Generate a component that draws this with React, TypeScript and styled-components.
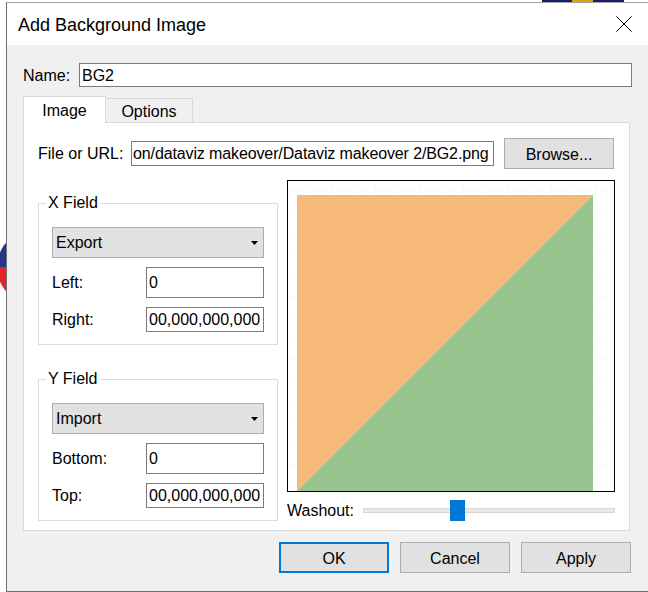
import styled, { createGlobalStyle } from "styled-components";

const GlobalStyle = createGlobalStyle`
	html, body {
		margin: 0;
		padding: 0;
		background: #fff;
	}
	body {
		font-family: "Liberation Sans", Arial, sans-serif;
		font-size: 16px;
		color: #000;
	}
	* {
		box-sizing: border-box;
	}
`;

// Desktop: what shows behind the dialog window
const Desktop = styled.div`
	position: relative;
	width: 648px;
	height: 592px;
	overflow: hidden;
	background: #fff;
	padding: 2px 0 0 6px;
`;

// bits of the app behind the dialog
const BackBar = styled.div`
	position: absolute;
	left: 542px;
	top: 0;
	width: 82px;
	height: 2px;
	background: linear-gradient(to right, #1b1f6b 0 30px, #d8a21b 30px 51px, #1b1f6b 51px);
`;

const BackBadge = styled.div`
	position: absolute;
	left: -3px;
	top: 229px;
	width: 76px;
	height: 76px;
	border-radius: 50%;
	background: linear-gradient(to bottom, #27348b 0 50%, #e2232a 50% 100%);
`;

const Dialog = styled.div`
	position: relative;
	z-index: 1;
	width: 661px;
	height: 590px;
	display: flex;
	flex-direction: column;
	background: #f0f0f0;
	border-left: 1px solid #6f6f6f;
	border-top: 1px solid #a0a0a0;
	border-bottom: 1px solid #6f6f6f;
`;

const TitleBar = styled.div`
	height: 42px;
	flex: none;
	display: flex;
	align-items: center;
	background: #fff;
	padding-left: 11px;
`;

const Title = styled.div`
	font-size: 18px;
	padding-top: 2px;
`;

const CloseBox = styled.div`
	margin-left: auto;
	margin-right: 20px;
	width: 46px;
	height: 100%;
	display: flex;
	align-items: center;
	justify-content: center;
`;

const Body = styled.div`
	flex: 1;
	display: flex;
	flex-direction: column;
	padding: 18px 0 0 16px;
`;

const NameRow = styled.div`
	display: flex;
	align-items: center;
	height: 24px;
`;

const Label = styled.div<{ $w: number }>`
	width: ${({ $w }) => $w}px;
	flex: none;
	white-space: nowrap;
	padding-top: 1px;
`;

const TextBox = styled.input<{ $w: number; $h: number; $pad?: number; $tight?: boolean }>`
	width: ${({ $w }) => $w}px;
	height: ${({ $h }) => $h}px;
	flex: none;
	margin: 0;
	padding: 1px ${({ $pad }) => $pad ?? 2}px 0;
	border: 1px solid #7a7a7a;
	background: #fff;
	font: inherit;
	letter-spacing: ${({ $tight }) => ($tight ? "-0.12px" : "normal")};
	color: #000;
	outline: none;
`;

const TabArea = styled.div`
	margin-top: 9px;
	width: 607px;
`;

const TabStrip = styled.div`
	display: flex;
	align-items: flex-end;
	margin-bottom: -1px;
	position: relative;
	z-index: 1;
`;

const Tab = styled.div<{ $active?: boolean }>`
	width: ${({ $active }) => ($active ? 83 : 87)}px;
	height: ${({ $active }) => ($active ? 27 : 25)}px;
	display: flex;
	align-items: center;
	justify-content: center;
	padding-top: ${({ $active }) => ($active ? 1 : 2)}px;
	background: ${({ $active }) => ($active ? "#fff" : "#f0f0f0")};
	border: 1px solid #d9d9d9;
	border-left: ${({ $active }) => ($active ? "1px solid #d9d9d9" : "none")};
	border-bottom: ${({ $active }) => ($active ? "none" : "1px solid #d9d9d9")};
`;

const Panel = styled.div`
	width: 607px;
	height: 409px;
	background: #fff;
	border: 1px solid #d9d9d9;
	padding: 15px 0 0 14px;
`;

const FileRow = styled.div`
	display: flex;
	align-items: center;
	height: 31px;
`;

const Button = styled.button<{ $primary?: boolean }>`
	width: 110px;
	height: 31px;
	flex: none;
	margin: 0;
	padding: 3px 0 0;
	font: inherit;
	color: #000;
	background: #e1e1e1;
	border: ${({ $primary }) => ($primary ? "2px solid #0078d7" : "1px solid #adadad")};
`;

const BrowseButton = styled(Button)`
	margin-left: 10px;
`;

const Columns = styled.div`
	display: grid;
	grid-template-columns: 240px 328px;
	column-gap: 9px;
	align-items: start;
	margin-top: 11px;
`;

const LeftCol = styled.div`
	display: flex;
	flex-direction: column;
	gap: 25px;
	padding-top: 14px;
`;

const Group = styled.fieldset`
	margin: 0;
	padding: 0;
	width: 240px;
	min-width: 0;
	border: 1px solid #dcdcdc;
`;

const Legend = styled.legend`
	margin-left: 7px;
	padding: 0 2px;
	height: 18px;
	line-height: 18px;
`;

const GroupBody = styled.div`
	display: flex;
	flex-direction: column;
	gap: 9px;
	padding: 15px 13px 12px 13px;
`;

const Select = styled.div`
	width: 212px;
	height: 31px;
	display: flex;
	align-items: center;
	padding: 1px 5px 0 3px;
	background: #e1e1e1;
	border: 1px solid #adadad;
`;

const Arrow = styled.svg`
	margin-left: auto;
	display: block;
`;

const FieldRow = styled.div`
	display: flex;
	align-items: center;
`;

const RightCol = styled.div`
	display: flex;
	flex-direction: column;
`;

const Preview = styled.div`
	width: 328px;
	height: 312px;
	border: 1px solid #000;
	padding: 14px 0 0 9px;
	background-color: #fff;
	background-image:
		repeating-linear-gradient(to right, transparent 0 21px, #f9f9f9 21px 22px),
		repeating-linear-gradient(to bottom, transparent 0 10px, #f9f9f9 10px 11px, transparent 11px 21px);
`;

const WashoutRow = styled.div`
	display: flex;
	align-items: center;
	height: 21px;
	margin-top: 8px;
`;

const Track = styled.div`
	position: relative;
	flex: 1;
	height: 21px;
	display: flex;
	align-items: center;
`;

const Rail = styled.div`
	width: 100%;
	height: 5px;
	background: #e7eae9;
	border: 1px solid #d6d6d6;
`;

const Thumb = styled.div`
	position: absolute;
	top: 0;
	width: 15px;
	height: 21px;
	background: #0078d7;
`;

const ButtonRow = styled.div`
	display: flex;
	justify-content: flex-end;
	gap: 11px;
	width: 608px;
	margin-top: 11px;
`;

const washout = 87; // thumb offset on the 252px track

const App = () => {
	return (
		<>
			<GlobalStyle />
			<Desktop>
				<BackBar />
				<BackBadge />
				<Dialog>
					<TitleBar>
						<Title>Add Background Image</Title>
						<CloseBox>
							<svg width="16" height="16" viewBox="0 0 16 16">
								<path d="M0.5 0.5 L15.5 15.5 M15.5 0.5 L0.5 15.5" stroke="#000" strokeWidth="1" />
							</svg>
						</CloseBox>
					</TitleBar>
					<Body>
						<NameRow>
							<Label $w={56}>Name:</Label>
							<TextBox $w={553} $h={24} readOnly value="BG2" />
						</NameRow>
						<TabArea>
							<TabStrip>
								<Tab $active>Image</Tab>
								<Tab>Options</Tab>
							</TabStrip>
							<Panel>
								<FileRow>
									<Label $w={93}>File or URL:</Label>
									<TextBox
										$w={363}
										$h={25}
										$pad={1}
										$tight
										readOnly
										value="on/dataviz makeover/Dataviz makeover 2/BG2.png"
									/>
									<BrowseButton>Browse...</BrowseButton>
								</FileRow>
								<Columns>
									<LeftCol>
										<Group>
											<Legend>X Field</Legend>
											<GroupBody>
												<Select>
													Export
													<Arrow width="7" height="4" viewBox="0 0 7 4">
														<polygon points="0,0 7,0 3.5,4" fill="#000" />
													</Arrow>
												</Select>
												<FieldRow>
													<Label $w={94}>Left:</Label>
													<TextBox $w={118} $h={31} readOnly value="0" />
												</FieldRow>
												<FieldRow>
													<Label $w={94}>Right:</Label>
													<TextBox $w={118} $h={25} readOnly value="00,000,000,000" />
												</FieldRow>
											</GroupBody>
										</Group>
										<Group>
											<Legend>Y Field</Legend>
											<GroupBody>
												<Select>
													Import
													<Arrow width="7" height="4" viewBox="0 0 7 4">
														<polygon points="0,0 7,0 3.5,4" fill="#000" />
													</Arrow>
												</Select>
												<FieldRow>
													<Label $w={94}>Bottom:</Label>
													<TextBox $w={118} $h={31} readOnly value="0" />
												</FieldRow>
												<FieldRow>
													<Label $w={94}>Top:</Label>
													<TextBox $w={118} $h={25} readOnly value="00,000,000,000" />
												</FieldRow>
											</GroupBody>
										</Group>
									</LeftCol>
									<RightCol>
										<Preview>
											<svg width="296" height="296" viewBox="0 0 296 296" style={{ display: "block" }}>
												<polygon points="0,0 296,0 0,296" fill="#f6b87b" />
												<polygon points="296,0 296,296 0,296" fill="#96c48e" />
											</svg>
										</Preview>
										<WashoutRow>
											<Label $w={76}>Washout:</Label>
											<Track>
												<Rail />
												<Thumb style={{ left: washout }} />
											</Track>
										</WashoutRow>
									</RightCol>
								</Columns>
							</Panel>
						</TabArea>
						<ButtonRow>
							<Button $primary>OK</Button>
							<Button>Cancel</Button>
							<Button>Apply</Button>
						</ButtonRow>
					</Body>
				</Dialog>
			</Desktop>
		</>
	);
};

export default App;
